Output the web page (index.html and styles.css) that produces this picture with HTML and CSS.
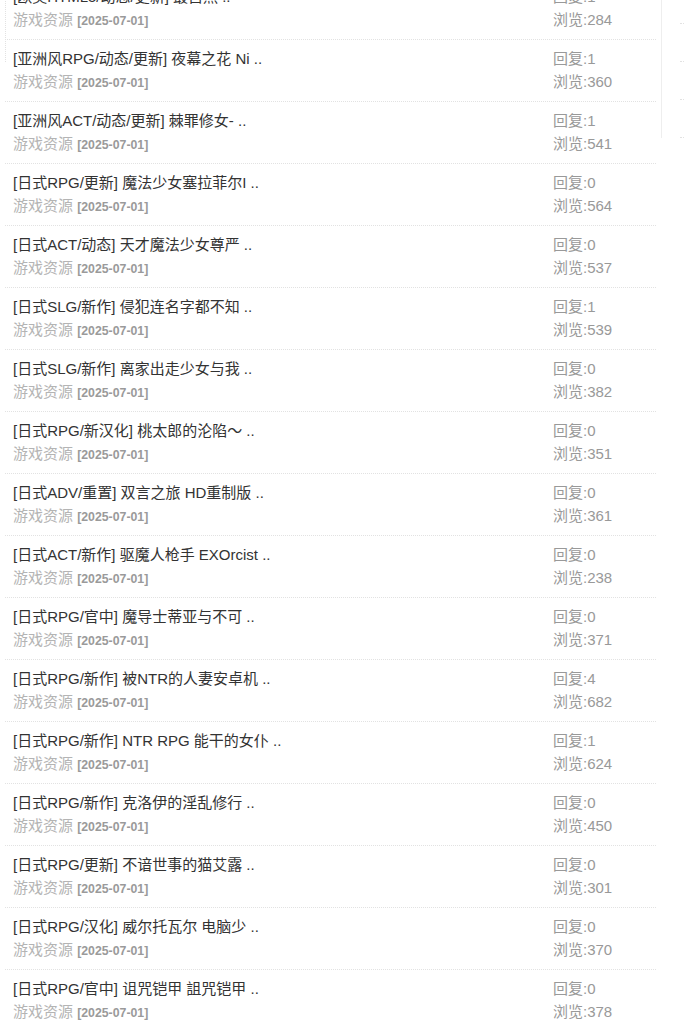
FILE: index.html
```html
<!DOCTYPE html>
<html lang="zh-CN">
<head>
<meta charset="utf-8">
<title>游戏资源</title>
<link rel="stylesheet" href="styles.css">
</head>
<body>
<div class="page">
  <div class="main">
    <ul class="list">
      <li class="row"><div class="info"><a class="title">[欧美HTML5/动态/更新] 最自然 ..</a><div class="meta">游戏资源 <b>[2025-07-01]</b></div></div><div class="stats"><div>回复:1</div><div>浏览:284</div></div></li>
      <li class="row"><div class="info"><a class="title">[亚洲风RPG/动态/更新] 夜幕之花 Ni ..</a><div class="meta">游戏资源 <b>[2025-07-01]</b></div></div><div class="stats"><div>回复:1</div><div>浏览:360</div></div></li>
      <li class="row"><div class="info"><a class="title">[亚洲风ACT/动态/更新] 棘罪修女- ..</a><div class="meta">游戏资源 <b>[2025-07-01]</b></div></div><div class="stats"><div>回复:1</div><div>浏览:541</div></div></li>
      <li class="row"><div class="info"><a class="title">[日式RPG/更新] 魔法少女塞拉菲尔I ..</a><div class="meta">游戏资源 <b>[2025-07-01]</b></div></div><div class="stats"><div>回复:0</div><div>浏览:564</div></div></li>
      <li class="row"><div class="info"><a class="title">[日式ACT/动态] 天才魔法少女尊严 ..</a><div class="meta">游戏资源 <b>[2025-07-01]</b></div></div><div class="stats"><div>回复:0</div><div>浏览:537</div></div></li>
      <li class="row"><div class="info"><a class="title">[日式SLG/新作] 侵犯连名字都不知 ..</a><div class="meta">游戏资源 <b>[2025-07-01]</b></div></div><div class="stats"><div>回复:1</div><div>浏览:539</div></div></li>
      <li class="row"><div class="info"><a class="title">[日式SLG/新作] 离家出走少女与我 ..</a><div class="meta">游戏资源 <b>[2025-07-01]</b></div></div><div class="stats"><div>回复:0</div><div>浏览:382</div></div></li>
      <li class="row"><div class="info"><a class="title">[日式RPG/新汉化] 桃太郎的沦陷～ ..</a><div class="meta">游戏资源 <b>[2025-07-01]</b></div></div><div class="stats"><div>回复:0</div><div>浏览:351</div></div></li>
      <li class="row"><div class="info"><a class="title">[日式ADV/重置] 双言之旅 HD重制版 ..</a><div class="meta">游戏资源 <b>[2025-07-01]</b></div></div><div class="stats"><div>回复:0</div><div>浏览:361</div></div></li>
      <li class="row"><div class="info"><a class="title">[日式ACT/新作] 驱魔人枪手 EXOrcist ..</a><div class="meta">游戏资源 <b>[2025-07-01]</b></div></div><div class="stats"><div>回复:0</div><div>浏览:238</div></div></li>
      <li class="row"><div class="info"><a class="title">[日式RPG/官中] 魔导士蒂亚与不可 ..</a><div class="meta">游戏资源 <b>[2025-07-01]</b></div></div><div class="stats"><div>回复:0</div><div>浏览:371</div></div></li>
      <li class="row"><div class="info"><a class="title">[日式RPG/新作] 被NTR的人妻安卓机 ..</a><div class="meta">游戏资源 <b>[2025-07-01]</b></div></div><div class="stats"><div>回复:4</div><div>浏览:682</div></div></li>
      <li class="row"><div class="info"><a class="title">[日式RPG/新作] NTR RPG 能干的女仆 ..</a><div class="meta">游戏资源 <b>[2025-07-01]</b></div></div><div class="stats"><div>回复:1</div><div>浏览:624</div></div></li>
      <li class="row"><div class="info"><a class="title">[日式RPG/新作] 克洛伊的淫乱修行 ..</a><div class="meta">游戏资源 <b>[2025-07-01]</b></div></div><div class="stats"><div>回复:0</div><div>浏览:450</div></div></li>
      <li class="row"><div class="info"><a class="title">[日式RPG/更新] 不谙世事的猫艾露 ..</a><div class="meta">游戏资源 <b>[2025-07-01]</b></div></div><div class="stats"><div>回复:0</div><div>浏览:301</div></div></li>
      <li class="row"><div class="info"><a class="title">[日式RPG/汉化] 威尔托瓦尔 电脑少 ..</a><div class="meta">游戏资源 <b>[2025-07-01]</b></div></div><div class="stats"><div>回复:0</div><div>浏览:370</div></div></li>
      <li class="row"><div class="info"><a class="title">[日式RPG/官中] 诅咒铠甲 詛咒铠甲 ..</a><div class="meta">游戏资源 <b>[2025-07-01]</b></div></div><div class="stats"><div>回复:0</div><div>浏览:378</div></div></li>
    </ul>
  </div>
  <aside class="side">
    <ul class="side-list">
      <li class="side-item"></li>
      <li class="side-item"></li>
      <li class="side-item"></li>
      <li class="side-item"></li>
    </ul>
  </aside>
</div>
</body>
</html>
```
FILE: styles.css
```css
html, body {
  margin: 0;
  padding: 0;
  overflow: hidden;
  background: #fff;
}
body {
  font-family: "Liberation Sans", Arial, "Noto Sans CJK SC", sans-serif;
  font-size: 15px;
  color: #333;
}
.page {
  display: flex;
  align-items: flex-start;
  margin-top: -22px;
  width: 760px;
}
.main {
  position: relative;
  margin-left: 5px;
  width: 651px;
  flex: none;
}
.main::before {
  content: "";
  position: absolute;
  left: 0;
  top: 0;
  height: 84px;
  border-left: 1px dotted #e2e2e2;
}
.list {
  list-style: none;
  margin: 0;
  padding: 0;
}
.row {
  display: flex;
  height: 54px;
  padding: 7px 0 0 8px;
  border-bottom: 1px dotted #e2e2e2;
  line-height: 23px;
}
.info {
  flex: 1;
  min-width: 0;
}
.title {
  display: block;
  color: #333;
  text-decoration: none;
  white-space: nowrap;
}
.meta {
  color: #b4b4b4;
}
.meta b {
  font-size: 12.3px;
  font-weight: bold;
  color: #9a9a9a;
}
.stats {
  width: 103px;
  flex: none;
  color: #999;
}
.side {
  margin-left: 5px;
  border-left: 1px solid #eee;
  padding: 8px 0 0 18px;
  width: 80px;
  flex: none;
}
.side-list {
  list-style: none;
  margin: 0;
  padding: 0;
}
.side-item {
  height: 37px;
  border-bottom: 1px dotted #e2e2e2;
}
```
